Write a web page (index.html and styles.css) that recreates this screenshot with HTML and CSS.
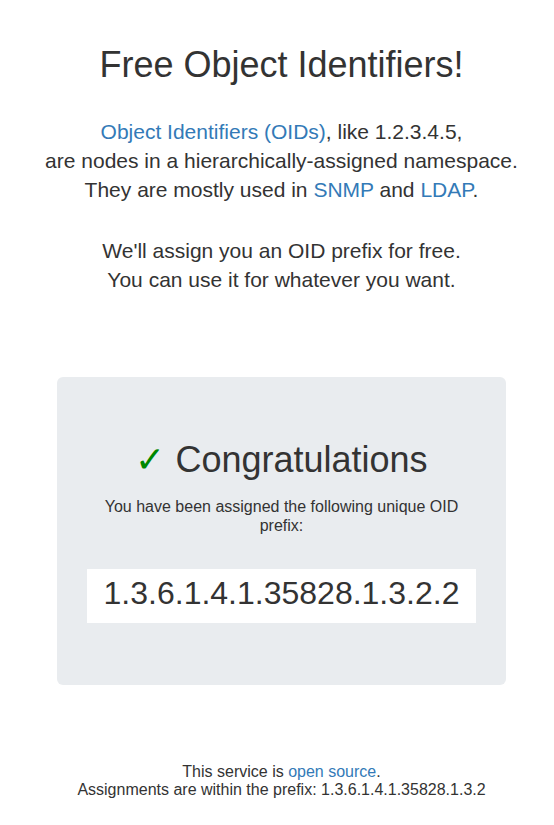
FILE: index.html
```html
<!DOCTYPE html>
<html lang="en">
<head>
<meta charset="utf-8">
<title>Free Object Identifiers!</title>
<link rel="stylesheet" href="styles.css">
</head>
<body>
<main class="page">
  <h1 class="title">Free Object Identifiers!</h1>
  <p class="lead"><a href="#">Object Identifiers (OIDs)</a>, like 1.2.3.4.5,<br>are nodes in a hierarchically-assigned namespace.<br>They are mostly used in <a href="#">SNMP</a> and <a href="#">LDAP</a>.</p>
  <p class="lead">We'll assign you an OID prefix for free.<br>You can use it for whatever you want.</p>
  <section class="jumbotron">
    <h2 class="congrats"><span class="check">✓</span> Congratulations</h2>
    <p class="assigned">You have been assigned the following unique OID prefix:</p>
    <div class="oid">1.3.6.1.4.1.35828.1.3.2.2</div>
  </section>
  <footer class="footer">
    <p>This service is <a href="#">open source</a>.<br>Assignments are within the prefix: 1.3.6.1.4.1.35828.1.3.2</p>
  </footer>
</main>
</body>
</html>
```
FILE: styles.css
```css
html, body {
  margin: 0;
  padding: 0;
  background: #fff;
}
body {
  font-family: "Liberation Sans", Arial, sans-serif;
  color: #333;
  font-size: 16px;
  line-height: 1.5;
}
a {
  color: #337ab7;
  text-decoration: none;
}
.page {
  padding: 43px 0 0 9px;
  text-align: center;
}
.title {
  font-size: 36px;
  font-weight: 400;
  line-height: 43px;
  margin: 0 0 31px;
}
.lead {
  font-size: 21px;
  line-height: 29px;
  margin: 0 0 32px;
}
.jumbotron {
  margin: 83px 48px 0;
  background: #e9ecef;
  border-radius: 6px;
  padding: 61px 30px 62px;
}
.congrats {
  font-size: 36px;
  font-weight: 400;
  line-height: 43px;
  margin: 0 0 16px;
}
.check {
  color: #080;
}
.assigned {
  font-size: 16px;
  line-height: 19px;
  margin: 0 0 34px;
}
.oid {
  background: #fff;
  font-size: 32px;
  line-height: 48px;
  padding: 0 0 6px;
}
.footer {
  margin-top: 78px;
  font-size: 16px;
  line-height: 18.4px;
}
.footer p {
  margin: 0;
}
```
